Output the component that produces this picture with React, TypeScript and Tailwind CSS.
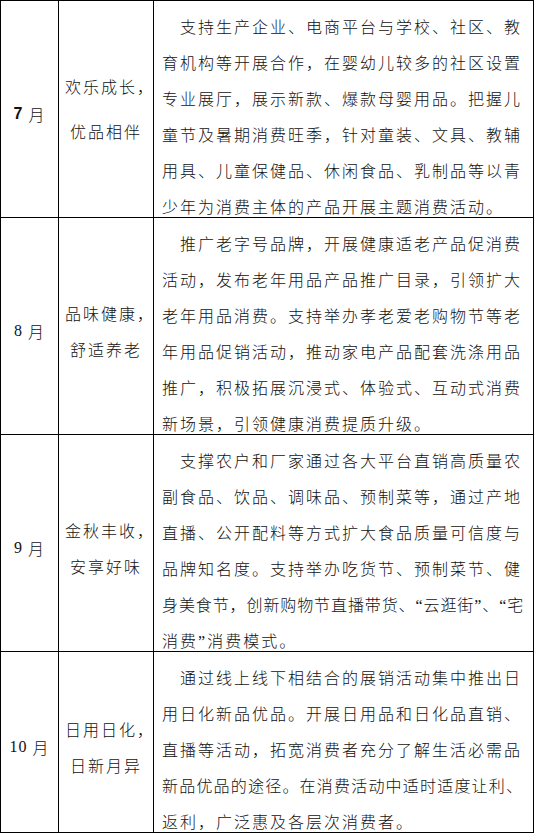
type Line = string | { t: string; cls: string };

type Row = {
  month: string;
  monthBold?: boolean;
  theme: string[];
  themeCls: string;
  lines: Line[];
};

const ROWS: Row[] = [
  {
    month: "7",
    monthBold: true,
    theme: ["欢乐成长，", "优品相伴"],
    themeCls: "leading-[45px]",
    lines: [
      "支持生产企业、电商平台与学校、社区、教",
      "育机构等开展合作，在婴幼儿较多的社区设置",
      "专业展厅，展示新款、爆款母婴用品。把握儿",
      "童节及暑期消费旺季，针对童装、文具、教辅",
      "用具、儿童保健品、休闲食品、乳制品等以青",
      "少年为消费主体的产品开展主题消费活动。",
    ],
  },
  {
    month: "8",
    theme: ["品味健康，", "舒适养老"],
    themeCls: "leading-[36px] pt-[10px]",
    lines: [
      "推广老字号品牌，开展健康适老产品促消费",
      "活动，发布老年用品产品推广目录，引领扩大",
      "老年用品消费。支持举办孝老爱老购物节等老",
      "年用品促销活动，推动家电产品配套洗涤用品",
      "推广，积极拓展沉浸式、体验式、互动式消费",
      "新场景，引领健康消费提质升级。",
    ],
  },
  {
    month: "9",
    theme: ["金秋丰收，", "安享好味"],
    themeCls: "leading-[36px] pt-[10px]",
    lines: [
      "支撑农户和厂家通过各大平台直销高质量农",
      "副食品、饮品、调味品、预制菜等，通过产地",
      "直播、公开配料等方式扩大食品质量可信度与",
      "品牌知名度。支持举办吃货节、预制菜节、健",
      { t: "身美食节，创新购物节直播带货、“云逛街”、“宅", cls: "tracking-[0.9px]" },
      "消费”消费模式。",
    ],
  },
  {
    month: "10",
    theme: ["日用日化，", "日新月异"],
    themeCls: "leading-[36px] pt-[10px]",
    lines: [
      "通过线上线下相结合的展销活动集中推出日",
      "用日化新品优品。开展日用品和日化品直销、",
      "直播等活动，拓宽消费者充分了解生活必需品",
      { t: "新品优品的途径。在消费活动中适时适度让利、", cls: "tracking-[1.2px]" },
      "返利，广泛惠及各层次消费者。",
    ],
  },
];

// curly quotes come from the western font, as in the Word source
function Quoted({ text }: { text: string }) {
  return (
    <>
      {text.split(/([“”])/).map((part, i) =>
        part === "“" || part === "”" ? (
          <span key={i} className="font-['Liberation_Serif',serif] leading-none">
            {part}
          </span>
        ) : (
          <span key={i}>{part}</span>
        )
      )}
    </>
  );
}

function ThemeLine({ text }: { text: string }) {
  if (text.endsWith("，")) {
    return (
      <div>
        {text.slice(0, -1)}
        <span className="-mr-[8px]">，</span>
      </div>
    );
  }
  return <div>{text}</div>;
}

export default function App() {
  return (
    <div className="w-[536px] h-[833px] overflow-hidden bg-white text-[#111]">
      <div className="grid w-[534px] grid-cols-[58px_95px_380px] border-l border-t border-black font-['Noto_Sans_CJK_SC',sans-serif] text-[16px] font-light">
        {ROWS.map((row) => (
          <div key={row.month} className="contents">
            <div className="flex items-center justify-center border-r border-b border-black pt-[10px] leading-[36px] tracking-[1px] whitespace-nowrap">
              <span
                className={
                  row.monthBold
                    ? "font-['Liberation_Sans',sans-serif] font-bold leading-none"
                    : "font-['Liberation_Serif',serif] font-normal leading-none"
                }
              >
                {row.month}
              </span>
              <span className="font-['Liberation_Serif',serif] leading-none">&nbsp;</span>
              <span>月</span>
            </div>

            <div
              className={`flex flex-col items-center justify-center border-r border-b border-black tracking-[2px] whitespace-nowrap ${row.themeCls}`}
            >
              {row.theme.map((t) => (
                <ThemeLine key={t} text={t} />
              ))}
            </div>

            <div className="border-r border-b border-black pl-[8px]">
              <div className="pt-[7px] -mb-[7px] leading-[36px] tracking-[2px]">
                {row.lines.map((line, i) => {
                  const text = typeof line === "string" ? line : line.t;
                  const cls = typeof line === "string" ? "" : line.cls;
                  return (
                    <div
                      key={i}
                      className={`whitespace-nowrap ${i === 0 ? "pl-[18px]" : ""} ${cls}`}
                    >
                      <Quoted text={text} />
                    </div>
                  );
                })}
              </div>
            </div>
          </div>
        ))}
      </div>
    </div>
  );
}
